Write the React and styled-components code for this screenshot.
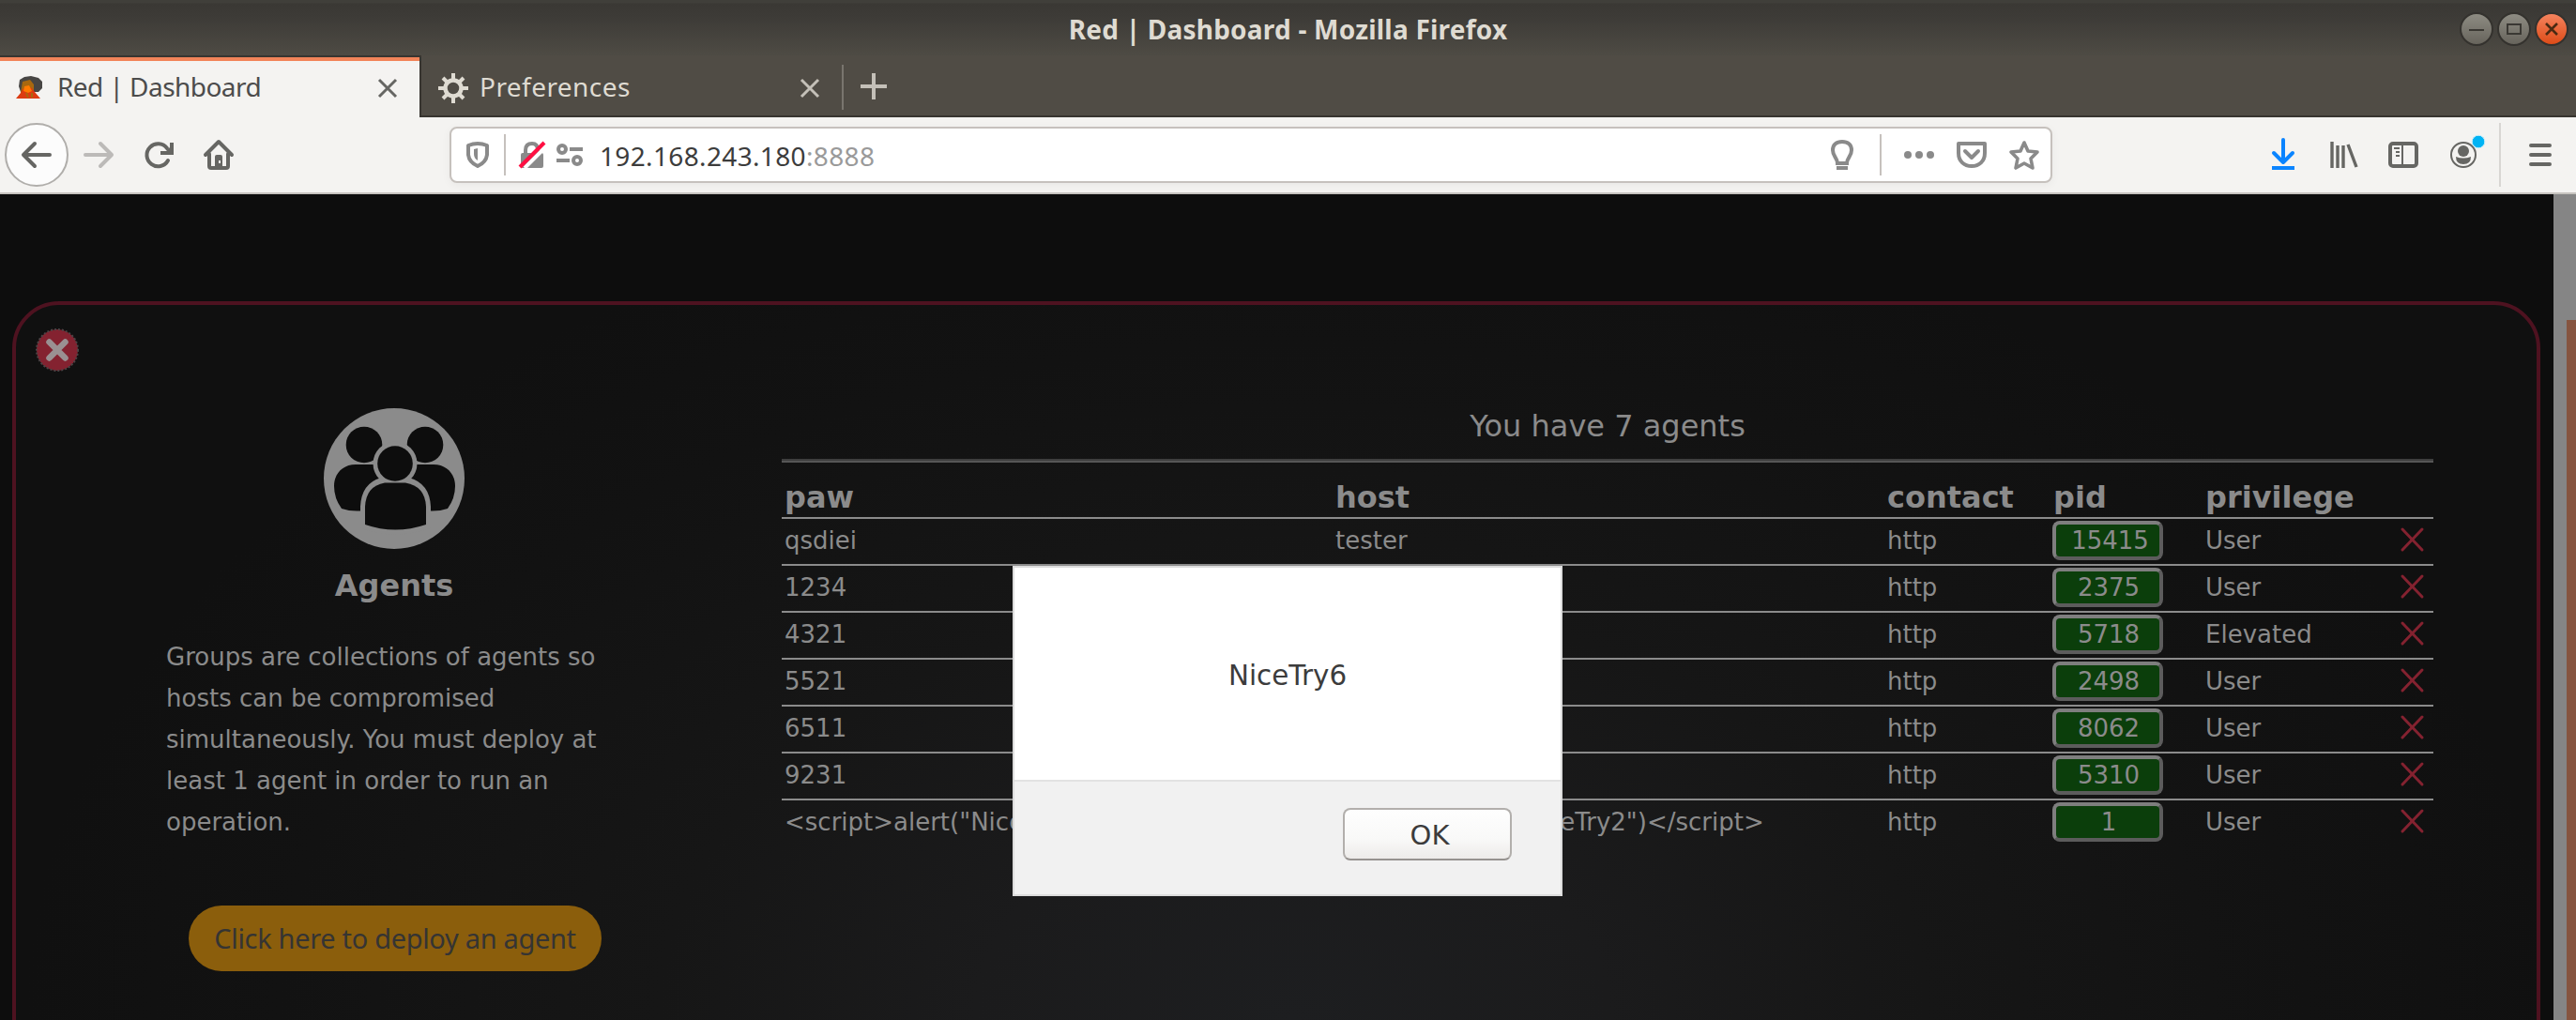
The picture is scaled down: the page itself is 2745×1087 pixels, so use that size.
import React from "react";
import styled, { createGlobalStyle } from "styled-components";

const ui = `"Noto Sans", "Open Sans", sans-serif`;
const web = `"DejaVu Sans", Verdana, sans-serif`;

const Global = createGlobalStyle`
  * { box-sizing: border-box; }
  body { margin: 0; background: #0d0d0d; overflow: hidden; }
  svg { display: block; flex: none; overflow: visible; }
`;

const Window = styled.div`
  width: 2745px;
  height: 1087px;
  display: flex;
  flex-direction: column;
  overflow: hidden;
`;

const TitleBar = styled.header`
  height: 59px;
  display: grid;
  grid-template-columns: 1fr auto 1fr;
  align-items: center;
  padding: 3px 8px 0 8px;
  background: linear-gradient(#403f3a 0, #403f3a 3px, #3a3834 4px, #3d3b37 18px, #4e4b44 59px);
`;

const WindowTitle = styled.h1`
  grid-column: 2;
  margin: 0;
  padding-bottom: 1px;
  font: bold 28px/40px ${ui};
  letter-spacing: ${(p) => p.$track}px;
  color: #dfdbd2;
  white-space: pre;
`;

const WindowButtons = styled.div`
  display: flex;
  justify-content: flex-end;
  gap: 4px;
`;

const TabStrip = styled.nav`
  height: 66px;
  display: flex;
  background: #504c45;
  box-shadow: inset 0 -2px #383530;
`;

const Tab = styled.div`
  display: flex;
  align-items: center;
  width: ${(p) => (p.$active ? 449 : 448)}px;
  height: 66px;
  padding: ${(p) => (p.$active ? "1px 24px 0 16px" : "3px 24px 0 18px")};
  background: ${(p) => (p.$active ? "#f4f3f1" : "transparent")};
  border-top: ${(p) => (p.$active ? "2px solid #383530" : "0")};
  border-right: ${(p) => (p.$active ? "2px solid #383530" : "0")};
  box-shadow: ${(p) => (p.$active ? "inset 0 4px #f28459" : "none")};
  color: ${(p) => (p.$active ? "#4c4c4c" : "#dfdbd2")};
`;

const TabLabel = styled.span`
  flex: 1;
  margin-left: ${(p) => p.$left}px;
  padding-bottom: 4px;
  font: 28px/40px ${ui};
  letter-spacing: ${(p) => p.$track}px;
  white-space: pre;
`;

const TabDivider = styled.span`
  width: 2px;
  height: 48px;
  margin: 10px 18px 0 0;
  background: #79756e;
`;

const NewTab = styled.div`
  padding-top: 19px;
`;

const Toolbar = styled.div`
  height: 82px;
  display: flex;
  align-items: center;
  padding-left: 5px;
  background: #f4f3f1;
  border-bottom: 2px solid #c6c3bf;
`;

const BackButton = styled.div`
  width: 68px;
  height: 68px;
  display: grid;
  place-items: center;
  border: 2px solid #b0aeab;
  border-radius: 50%;
  background: #fcfcfc;
`;

const NavIcons = styled.div`
  display: flex;
  align-items: center;
  gap: 33px;
  width: 406px;
  padding-left: 16px;
`;

const AddressBar = styled.div`
  width: 1708px;
  height: 60px;
  display: flex;
  align-items: center;
  padding: 0 12px 0 16px;
  background: #fff;
  border: 2px solid #c6c1bd;
  border-radius: 8px;
  box-shadow: 0 2px 10px rgba(0, 0, 0, 0.05);
`;

const Separator = styled.span`
  width: 2px;
  height: ${(p) => p.$h}px;
  margin: 0 ${(p) => p.$right}px 0 ${(p) => p.$left}px;
  background: ${(p) => p.$color || "#c6c1bd"};
`;

const Url = styled.span`
  flex: 1;
  margin-left: 18px;
  padding-top: 2px;
  font: 28px/40px ${ui};
  letter-spacing: 0.35px;
  color: #3c3c3c;
`;

const Port = styled.span`
  color: #9a9a9a;
`;

const AddressActions = styled.div`
  display: flex;
  align-items: center;
  gap: 24px;
`;

const ToolbarActions = styled.div`
  display: flex;
  align-items: center;
  gap: 34px;
  margin-left: 234px;
`;

const Viewport = styled.main`
  position: relative;
  height: 880px;
  display: flex;
  background: #0d0d0d;
`;

const Page = styled.div`
  width: 2721px;
  padding: 114px 14px 0 13px;
`;

const Card = styled.section`
  position: relative;
  height: 820px;
  display: flex;
  border: 4px solid #4e1220;
  border-radius: 50px;
  background: radial-gradient(ellipse 1350px 900px at 1360px 760px, #1d1e20 0, #1b1b1c 25%, #161616 50%, #121212 80%, #101010 100%);
`;

const CloseBadge = styled.div`
  position: absolute;
  left: 21px;
  top: 25px;
`;

const Intro = styled.aside`
  width: 486px;
  margin-left: 160px;
  padding-top: 110px;
  display: flex;
  flex-direction: column;
  align-items: center;
  font-family: ${web};
  color: #8b8b8b;
`;

const IntroTitle = styled.h2`
  margin: 19px 0 34px;
  font-size: 32px;
  line-height: 40px;
`;

const IntroText = styled.p`
  width: 100%;
  margin: 0;
  font-size: 26px;
  line-height: 44px;
`;

const DeployButton = styled.button`
  width: 440px;
  height: 70px;
  margin: 67px 0 0 2px;
  padding: 0;
  border: 0;
  border-radius: 35px;
  background: #8b5e0c;
  color: #353433;
  font: 29px/40px ${ui};
  letter-spacing: ${(p) => p.$track}px;
  white-space: nowrap;
`;

const Agents = styled.div`
  width: 1760px;
  margin-left: 170px;
  padding-top: 109px;
  font-family: ${web};
  color: #8b8b8b;
`;

const Count = styled.p`
  margin: 0 0 15px;
  font-size: 32px;
  line-height: 40px;
  text-align: center;
`;

const Rule = styled.hr`
  height: 4px;
  margin: 0;
  border: 0;
  background: linear-gradient(#3e3e3e 50%, #565656 50%);
`;

const Row = styled.div`
  display: grid;
  grid-template-columns: 587px 588px 177px 162px 211px 35px;
  align-items: center;
  height: 50px;
  border-bottom: ${(p) => (p.$last ? 0 : "2px solid #8b8b8b")};
  padding-bottom: ${(p) => (p.$last ? "4px" : "2px")};
  font-size: 26px;
  line-height: 46px;
`;

const HeadRow = styled(Row)`
  height: 60px;
  padding: 16px 0 0;
  font-size: 32px;
  line-height: 40px;
  font-weight: bold;
`;

const Cell = styled.span`
  padding: 0 3px;
  white-space: nowrap;
`;

const Pid = styled.span`
  width: 118px;
  height: 42px;
  margin-left: 2px;
  padding-left: ${(p) => (p.$wide ? 5 : 2)}px;
  border: 4px solid;
  border-color: #7e7e7e #5c5c5c #5c5c5c #7e7e7e;
  border-radius: 8px;
  background: #0b3e0b;
  line-height: 35px;
  text-align: center;
`;

const Scrollbar = styled.div`
  width: 24px;
  padding: 134px 0 0 14px;
  background: #858585;
`;

const Thumb = styled.div`
  height: 746px;
  background: #86543f;
`;

const Dialog = styled.div`
  position: absolute;
  left: 1079px;
  top: 396px;
  width: 586px;
  height: 352px;
  display: flex;
  flex-direction: column;
  border: 2px solid #dcdcdc;
  background: #fff;
  font-family: ${web};
  font-size: 29.4px;
  color: #3c3c3c;
`;

const Message = styled.div`
  height: 226px;
  padding-top: 4px;
  display: grid;
  place-items: center;
`;

const Footer = styled.div`
  flex: 1;
  display: flex;
  justify-content: flex-end;
  padding: 28px 52px 0 0;
  border-top: 2px solid #e2e2e2;
  background: #f1f1f1;
`;

const OkButton = styled.button`
  width: 180px;
  height: 56px;
  padding: 1px 0 0 5px;
  border: 2px solid #b2afac;
  border-bottom-color: #96928f;
  border-radius: 8px;
  background: linear-gradient(#fefefe, #f9f9f8 60%, #edebe9);
  color: #3c3c3c;
  font: 29px/40px ${web};
`;

const G = "#8a8a8a";
const D = "#666663";

const Svg = ({ w, h, children, ...rest }) => (
  <svg width={w} height={h} viewBox={`0 0 ${w} ${h}`} fill="none" stroke={G} strokeWidth="4" {...rest}>
    {children}
  </svg>
);

const Arrow = ({ color, flip }) => (
  <Svg w={32} h={28} stroke={color} strokeLinecap="round" strokeLinejoin="round" transform={flip ? "scale(-1 1)" : undefined}>
    <path d="M30 14H3M14 2L2 14L14 26" />
  </Svg>
);

const WinButton = ({ kind }) => (
  <Svg w={36} h={36} strokeWidth="2">
    <defs>
      <linearGradient id={"win-" + kind} x1="0" y1="0" x2="0" y2="1">
        <stop offset="0" stopColor={kind === "close" ? "#f68560" : "#8f8d84"} />
        <stop offset="1" stopColor={kind === "close" ? "#dc4a16" : "#66635b"} />
      </linearGradient>
    </defs>
    <circle cx="18" cy="18" r="17" fill={`url(#win-${kind})`} stroke="#34322e" />
    {kind === "min" && <path d="M10 19H26" stroke="#3a3833" />}
    {kind === "max" && <rect x="11" y="13" width="14" height="10" stroke="#3a3833" />}
    {kind === "close" && <path d="M12 12L24 24M24 12L12 24" stroke="#4a2a12" strokeWidth="2.6" />}
  </Svg>
);

const TabClose = ({ color }) => (
  <Svg w={20} h={20} stroke={color} strokeWidth="3">
    <path d="M1 1L19 19M19 1L1 19" />
  </Svg>
);

const Volcano = () => (
  <Svg w={32} h={26} stroke="none">
    <path d="M5 4L10 1L17 0L25 2L29 6V13L25 17L6 17L4 11Z" fill="#474543" />
    <path d="M8 6L16 4L20 9L20 18H6Z" fill="#a8680f" />
    <path d="M8 14L14 11L18 13L21 17L27 24H1L6 18Z" fill="#dc3c12" />
    <path d="M10 11L15 10L18 16L14 18L9 16Z" fill="#ff7a00" />
    <path d="M12 18L14 23M18 18V23" stroke="#a8680f" strokeWidth="2" />
  </Svg>
);

const Gear = () => (
  <Svg w={32} h={32} stroke="#dfdbd2">
    <circle cx="16" cy="16" r="8.5" strokeWidth="4.5" />
    <path d="M16 0V6M16 26V32M0 16H6M26 16H32M5 5L9 9M23 23L27 27M27 5L23 9M9 23L5 27" />
  </Svg>
);

const Reload = () => (
  <Svg w={30} h={28} stroke={D}>
    <path d="M25 20A12 12 0 1 1 24 7" strokeLinecap="round" />
    <path d="M29 1V12H17" />
    <path d="M29 4V12H21Z" fill={D} stroke="none" />
  </Svg>
);

const Home = () => (
  <Svg w={32} h={32} stroke={D} strokeLinecap="round" strokeLinejoin="round">
    <path d="M2 16L16 2L30 16M6 15V28Q6 30 8 30H24Q26 30 26 28V15" />
    <path d="M12 30V18Q12 16 14 16H18Q20 16 20 18V30Z" fill={D} stroke="none" />
    <rect x="16" y="22" width="2" height="3" fill="#f4f3f1" stroke="none" />
  </Svg>
);

const Shield = () => (
  <Svg w={24} h={28}>
    <path d="M2 4Q12 0 22 4V14Q21 22 12 26Q3 22 2 14Z" strokeLinejoin="round" />
    <path d="M12 7V20Q8 18 8 13V8Z" fill={G} stroke="none" />
  </Svg>
);

const Lock = () => (
  <Svg w={28} h={28}>
    <path d="M7 14V9Q7 2 14 2Q20 2 20 9V14" />
    <rect x="2" y="12" width="24" height="16" rx="2" fill={G} stroke="none" />
    <path d="M6 28L29 5" stroke="#fff" strokeWidth="4" />
    <path d="M1 27L27 1" stroke="#ff0f42" strokeWidth="4" />
  </Svg>
);

const Permissions = () => (
  <Svg w={28} h={24}>
    <circle cx="6" cy="6" r="4" />
    <circle cx="22" cy="18" r="4" />
    <path d="M14 6H28M0 18H14" />
  </Svg>
);

const Bulb = () => (
  <Svg w={24} h={32}>
    <path d="M7 25C7 19 2 18 2 11C2 5 6 2 12 2C18 2 22 5 22 11C22 18 17 19 17 25Z" />
    <path d="M6 30H18" />
  </Svg>
);

const Dots = () => (
  <Svg w={32} h={8} stroke="none" fill={G}>
    <circle cx="4" cy="4" r="4" />
    <circle cx="16" cy="4" r="4" />
    <circle cx="28" cy="4" r="4" />
  </Svg>
);

const Pocket = () => (
  <Svg w={32} h={28} strokeLinejoin="round">
    <path d="M2 2H30V12C30 21 24 26 16 26C8 26 2 21 2 12Z" />
    <path d="M9 10L16 17L23 10" strokeLinecap="round" />
  </Svg>
);

const Star = () => (
  <Svg w={32} h={32} strokeLinejoin="round" strokeWidth="3.6">
    <path d="M16 3L20 12L30 13L23 20L25 30L16 25L7 30L9 20L2 13L12 12Z" />
  </Svg>
);

const Download = () => (
  <Svg w={28} h={32} stroke="#0a84ff">
    <path d="M12 0V24M2 14L12 24L22 14" strokeLinejoin="round" strokeLinecap="round" />
    <path d="M0 30H24" />
  </Svg>
);

const Library = () => (
  <Svg w={28} h={28} stroke={D}>
    <path d="M2 0V28M8 4V28M14 4V28M19 3L28 27" strokeWidth="3.4" />
  </Svg>
);

const Sidebar = () => (
  <Svg w={32} h={28} stroke={D}>
    <rect x="2" y="2" width="28" height="24" rx="3" />
    <path d="M15 2V26M6 7H12M8 11H12M8 15H12" strokeWidth="2" />
  </Svg>
);

const Account = () => (
  <Svg w={38} h={52} stroke={D}>
    <circle cx="14" cy="26" r="13" strokeWidth="2" />
    <circle cx="14" cy="22" r="6" fill={D} stroke="none" />
    <path d="M6 28Q14 31 22 28Q22 36 14 36Q6 36 6 28Z" fill={D} stroke="none" />
    <circle cx="30" cy="12" r="6.8" fill="#00b3f4" stroke="#c9eefa" strokeWidth="1" />
  </Svg>
);

const Menu = () => (
  <Svg w={24} h={24} stroke={D} strokeLinecap="round">
    <path d="M2 2H22M2 12H22M2 22H22" />
  </Svg>
);

const CloseIcon = () => (
  <Svg w={46} h={46}>
    <circle cx="23" cy="23" r="22" fill="#842230" stroke="#4d4345" strokeWidth="2" strokeDasharray="2 2" />
    <path d="M14.5 14.5L31.5 31.5M31.5 14.5L14.5 31.5" stroke="#9a9092" strokeWidth="6.5" strokeLinecap="round" />
  </Svg>
);

const GroupIcon = () => (
  <Svg w={150} h={150} stroke="none" fill="#0d0d0d">
    <circle cx="75" cy="75" r="75" fill="#8b8b8b" />
    <circle cx="43" cy="39" r="19.3" />
    <circle cx="108" cy="39" r="19.3" />
    <path d="M60 60H34C20 60 11 70 11 83Q11 96 19 107Q28 110 38 109.500H60Z" />
    <path d="M91 60H117C131 60 140 70 140 83Q140 96 132 107Q123 110 113 109.500H91Z" />
    <circle cx="76" cy="59" r="23.500" fill="#8b8b8b" />
    <path
      d="M62 79H90Q108 84 109 105V124Q76 135 44 124V105Q45 84 62 79Z"
      fill="#8b8b8b"
      stroke="#8b8b8b"
      strokeWidth="10"
    />
    <circle cx="76" cy="59" r="18.8" />
    <path d="M65 79.500H87Q108 83 109 105V124Q76 135 44 124V105Q45 83 65 79.500Z" />
  </Svg>
);

const RemoveIcon = () => (
  <Svg w={26} h={27} stroke="#842230" strokeWidth="3">
    <path d="M2 1L23 23M23 1L2 23" strokeLinecap="round" />
  </Svg>
);

const agents = [
  ["qsdiei", "tester", "15415", "User"],
  ["1234", "", "2375", "User"],
  ["4321", "", "5718", "Elevated"],
  ["5521", "", "2498", "User"],
  ["6511", "", "8062", "User"],
  ["9231", "", "5310", "User"],
  ['<script>alert("NiceTry1")</script>', '<script>alert("NiceTry2")</script>', "1", "User"],
];

export default function App() {
  return (
    <Window>
      <Global />
      <TitleBar>
        <WindowTitle $track={0.22}>Red | Dashboard - Mozilla Firefox</WindowTitle>
        <WindowButtons>
          <WinButton kind="min" />
          <WinButton kind="max" />
          <WinButton kind="close" />
        </WindowButtons>
      </TitleBar>
      <TabStrip>
        <Tab $active>
          <Volcano />
          <TabLabel $left={13} $track={-0.55}>
            Red | Dashboard
          </TabLabel>
          <TabClose color="#666663" />
        </Tab>
        <Tab>
          <Gear />
          <TabLabel $left={12} $track={0.45}>
            Preferences
          </TabLabel>
          <TabClose color="#c4c0b8" />
        </Tab>
        <TabDivider />
        <NewTab>
          <Svg w={28} h={28} stroke="#c4c0b8">
            <path d="M14 0V28M0 14H28" />
          </Svg>
        </NewTab>
      </TabStrip>
      <Toolbar>
        <BackButton>
          <Arrow color={D} />
        </BackButton>
        <NavIcons>
          <Arrow color="#bcbab8" flip />
          <Reload />
          <Home />
        </NavIcons>
        <AddressBar>
          <Shield />
          <Separator $h={44} $left={16} $right={14} />
          <Lock />
          <Svg w={12} h={1} stroke="none" />
          <Permissions />
          <Url>
            192.168.243.180<Port>:8888</Port>
          </Url>
          <Bulb />
          <Separator $h={44} $left={28} $right={24} />
          <AddressActions>
            <Dots />
            <Pocket />
            <Star />
          </AddressActions>
        </AddressBar>
        <ToolbarActions>
          <Download />
          <Library />
          <Sidebar />
          <Account />
        </ToolbarActions>
        <Separator $h={68} $left={14} $right={30} $color="#d8d6d3" />
        <Menu />
      </Toolbar>
      <Viewport>
        <Page>
          <Card>
            <CloseBadge>
              <CloseIcon />
            </CloseBadge>
            <Intro>
              <GroupIcon />
              <IntroTitle>Agents</IntroTitle>
              <IntroText>
                Groups are collections of agents so hosts can be compromised simultaneously. You must deploy at least 1
                agent in order to run an operation.
              </IntroText>
              <DeployButton $track={-0.32}>Click here to deploy an agent</DeployButton>
            </Intro>
            <Agents>
              <Count>You have 7 agents</Count>
              <Rule />
              <HeadRow>
                <Cell>paw</Cell>
                <Cell>host</Cell>
                <Cell>contact</Cell>
                <Cell>pid</Cell>
                <Cell>privilege</Cell>
              </HeadRow>
              {agents.map(([paw, host, pid, privilege], i) => (
                <Row key={pid} $last={i === agents.length - 1}>
                  <Cell>{paw}</Cell>
                  <Cell>{host}</Cell>
                  <Cell>http</Cell>
                  <Pid $wide={pid.length > 4}>{pid}</Pid>
                  <Cell>{privilege}</Cell>
                  <RemoveIcon />
                </Row>
              ))}
            </Agents>
          </Card>
        </Page>
        <Scrollbar>
          <Thumb />
        </Scrollbar>
        <Dialog role="alertdialog">
          <Message>NiceTry6</Message>
          <Footer>
            <OkButton>OK</OkButton>
          </Footer>
        </Dialog>
      </Viewport>
    </Window>
  );
}
